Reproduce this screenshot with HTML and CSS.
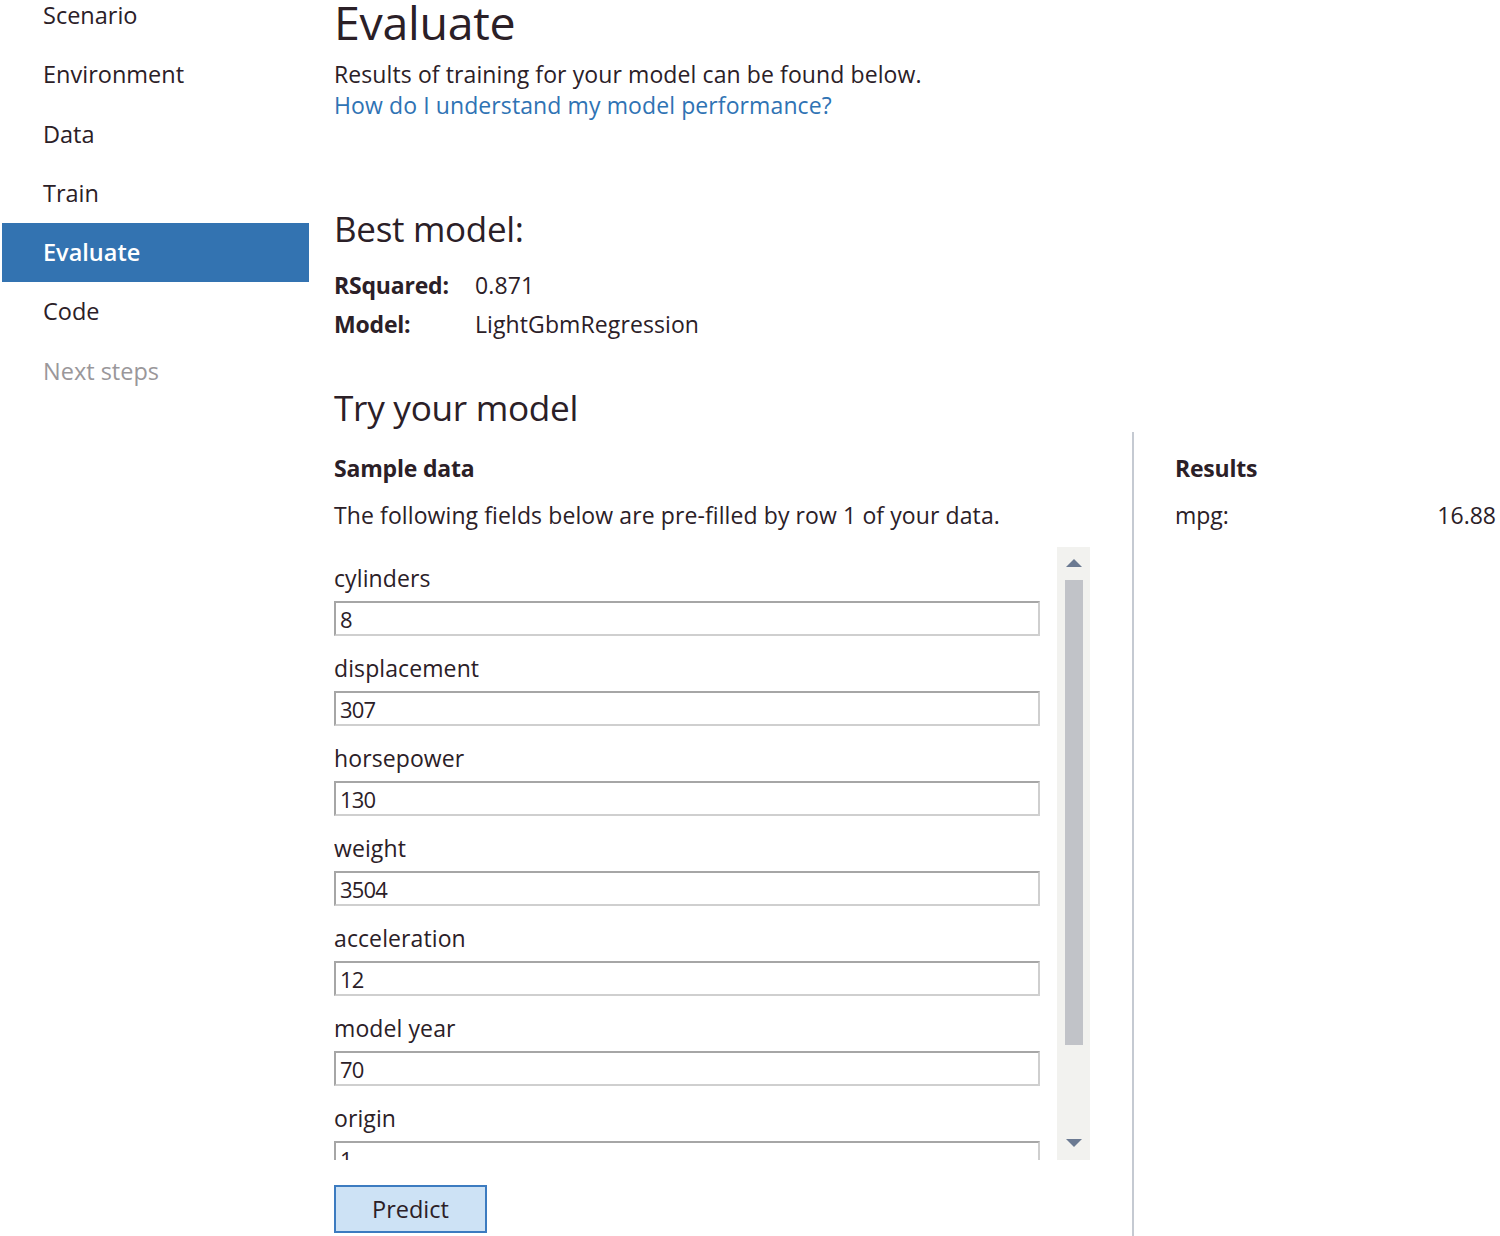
FILE: index.html
```html
<!DOCTYPE html>
<html>
<head>
<meta charset="utf-8">
<link rel="stylesheet" href="styles.css">
</head>
<body>
<div class="app">
  <nav class="sidebar">
    <div class="nav-item">Scenario</div>
    <div class="nav-item">Environment</div>
    <div class="nav-item">Data</div>
    <div class="nav-item">Train</div>
    <div class="nav-item active">Evaluate</div>
    <div class="nav-item">Code</div>
    <div class="nav-item disabled">Next steps</div>
  </nav>
  <main class="main">
    <h1 class="title">Evaluate</h1>
    <p class="intro">Results of training for your model can be found below.</p>
    <a class="link">How do I understand my model performance?</a>

    <h2 class="best">Best model:</h2>
    <div class="metrics">
      <div class="mlabel">RSquared:</div><div class="mvalue">0.871</div>
      <div class="mlabel">Model:</div><div class="mvalue">LightGbmRegression</div>
    </div>

    <h2 class="try">Try your model</h2>
    <div class="try-grid">
      <section class="sample">
        <div class="sub">Sample data</div>
        <p class="desc">The following fields below are pre-filled by row 1 of your data.</p>
        <div class="scroll-wrap">
          <div class="fields">
            <div class="field"><div class="flabel">cylinders</div><div class="input">8</div></div>
            <div class="field"><div class="flabel">displacement</div><div class="input">307</div></div>
            <div class="field"><div class="flabel">horsepower</div><div class="input">130</div></div>
            <div class="field"><div class="flabel">weight</div><div class="input">3504</div></div>
            <div class="field"><div class="flabel">acceleration</div><div class="input">12</div></div>
            <div class="field"><div class="flabel">model year</div><div class="input">70</div></div>
            <div class="field"><div class="flabel">origin</div><div class="input">1</div></div>
          </div>
          <div class="scrollbar">
            <div class="arrow up"></div>
            <div class="thumb"></div>
            <div class="arrow down"></div>
          </div>
        </div>
        <div class="btn">Predict</div>
      </section>
      <section class="results">
        <div class="sub">Results</div>
        <div class="res-row"><span>mpg:</span><span>16.88</span></div>
      </section>
    </div>
  </main>
</div>
</body>
</html>
```
FILE: styles.css
```css
html, body {
  margin: 0;
  padding: 0;
  background: #fff;
  width: 1500px;
  height: 1236px;
  overflow: hidden;
}
body {
  font-family: "Open Sans", "Noto Sans", sans-serif;
  color: #2b2027;
}
.app {
  display: flex;
  height: 1236px;
}
.sidebar {
  width: 307px;
  margin-left: 2px;
  margin-top: -14px;
  flex-shrink: 0;
}
.nav-item {
  height: 59.3px;
  line-height: 59px;
  padding-left: 41px;
  font-size: 23.5px;
  letter-spacing: 0;
}
.nav-item.active {
  background: #3373b1;
  color: #fff;
  font-weight: 600;
}
.nav-item.disabled {
  color: #9a979a;
}
.main {
  margin-left: 25px;
  flex: 1;
  display: flex;
  flex-direction: column;
  align-items: flex-start;
}
.title {
  margin: -12px 0 0 0;
  font-size: 46.5px;
  font-weight: 400;
  line-height: 68px;
  letter-spacing: -0.3px;
}
.intro {
  margin: 3px 0 0 0;
  font-size: 23px;
  line-height: 31px;
  letter-spacing: 0.1px;
}
.link {
  font-size: 23px;
  line-height: 31px;
  color: #2f73b4;
  letter-spacing: 0.1px;
}
.best {
  margin: 84px 0 0 0;
  font-size: 35px;
  font-weight: 400;
  line-height: 48px;
  letter-spacing: -0.3px;
}
.metrics {
  display: grid;
  grid-template-columns: 141px auto;
  margin-top: 13px;
  font-size: 23px;
  line-height: 39px;
  letter-spacing: 0.1px;
}
.mlabel { font-weight: 700; letter-spacing: -0.2px; }
.try {
  margin: 38px 0 0 0;
  font-size: 35.2px;
  font-weight: 400;
  line-height: 50px;
  letter-spacing: -0.3px;
}
.try-grid {
  display: flex;
  width: 100%;
  flex: 1;
}
.sample {
  width: 798px;
  border-right: 2px solid #c5cad2;
  padding-top: 18px;
  display: flex;
  flex-direction: column;
}
.sub {
  font-size: 23px;
  font-weight: 700;
  line-height: 36px;
  letter-spacing: -0.2px;
}
.desc {
  margin: 13px 0 0 0;
  font-size: 23px;
  line-height: 32px;
  letter-spacing: 0.1px;
}
.scroll-wrap {
  display: flex;
  height: 613px;
  margin-top: 16px;
  overflow: hidden;
}
.fields {
  width: 706px;
  padding-top: 18px;
  margin-right: 17px;
}
.field {
  height: 90px;
}
.flabel {
  font-size: 23px;
  line-height: 26px;
  letter-spacing: 0.1px;
}
.input {
  margin-top: 10px;
  height: 31px;
  border: 2px solid #a6a6a6;
  border-bottom-color: #cfcfcf;
  border-right-color: #cfcfcf;
  font-size: 22px;
  line-height: 32px;
  padding-left: 4px;
  letter-spacing: -0.8px;
}
.scrollbar {
  width: 33px;
  background: #f2f2ef;
  display: flex;
  flex-direction: column;
  align-items: center;
}
.arrow {
  width: 0;
  height: 0;
  border-left: 8px solid transparent;
  border-right: 8px solid transparent;
}
.arrow.up {
  margin-top: 12px;
  border-bottom: 8px solid #6b7a92;
}
.thumb {
  width: 18px;
  margin-top: 13px;
  height: 465px;
  background: #c1c3c8;
}
.arrow.down {
  margin-top: 94px;
  border-top: 8px solid #6b7a92;
}
.btn {
  margin-top: 25px;
  width: 149px;
  height: 44px;
  border: 2px solid #3c7bc0;
  background: #cde2f5;
  font-size: 23.5px;
  line-height: 44px;
  text-align: center;
  letter-spacing: 0;
}
.results {
  flex: 1;
  padding-top: 18px;
  padding-left: 41px;
  padding-right: 4px;
}
.res-row {
  display: flex;
  justify-content: space-between;
  margin-top: 13px;
  font-size: 23px;
  line-height: 32px;
  letter-spacing: 0;
}
```
